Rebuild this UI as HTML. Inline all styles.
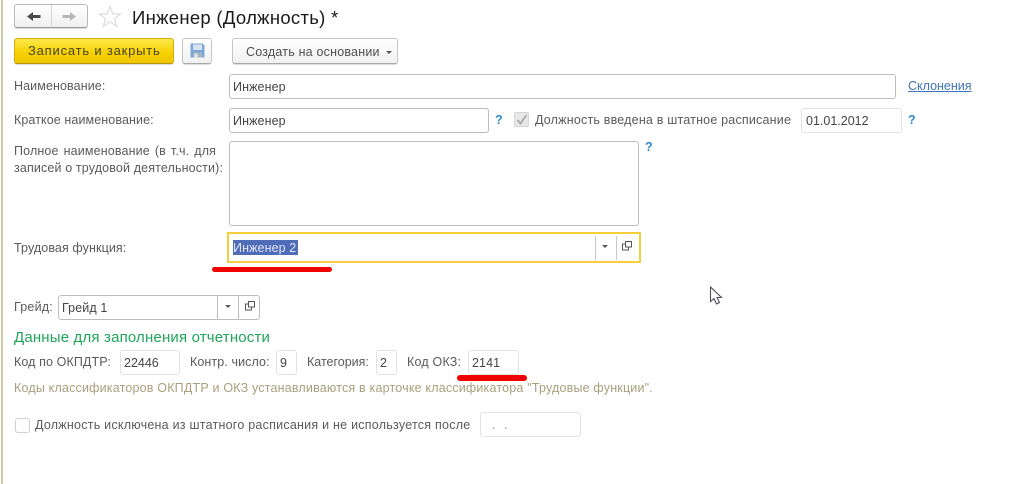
<!DOCTYPE html>
<html lang="ru"><head><meta charset="utf-8"><title>Инженер (Должность)</title>
<style>
html,body{margin:0;padding:0;width:1024px;height:484px;overflow:hidden;background:#fff}
body{position:relative;font-family:"Liberation Sans",sans-serif;font-size:12.5px;color:#4d4d4d;filter:blur(.3px)}
.a,.t,.f,.b{position:absolute;box-sizing:border-box}
.t{white-space:nowrap;line-height:14px;letter-spacing:.1px;color:#5a5a5a}
.f{background:#fff;border:1px solid #c4c4c4;border-radius:3px;white-space:nowrap;padding-left:3px;color:#444;letter-spacing:.1px;line-height:24px}
.d{border-color:#e2e2e2}
.b{border:1px solid #c6c6c6;border-bottom-color:#a8a8a8;border-radius:3px;background:linear-gradient(#fff,#f0f0f0);box-shadow:0 1px 0 #ddd}
.q{color:#2f8ccb;font-weight:bold}
.s{position:absolute;width:1px;background:#c8c8c8}
.tr{position:absolute;width:0;height:0;border-left:3px solid transparent;border-right:3px solid transparent;border-top:3px solid #555}
</style></head><body>
<div class="a" style="left:1px;top:0;width:2px;height:484px;background:#cfcda6"></div>

<div class="b" style="left:14px;top:4px;width:74px;height:24px;border-color:#b8b8b8;border-bottom-color:#999"></div>
<div class="s" style="left:51px;top:5px;height:21px;background:#d5d5d5"></div>
<svg class="a" style="left:26px;top:11px" width="16" height="11"><path d="M1 5.500L7 1V4H14.500V7H7V10Z" fill="#4a4a4a"/></svg>
<svg class="a" style="left:61px;top:11px" width="16" height="11"><path d="M15 5.500L9 1V4H1.500V7H9V10Z" fill="#b8b8b8"/></svg>
<svg class="a" style="left:98px;top:5px" width="24" height="23"><path d="M12 1.500L15 9H22.500L16.500 13.700L18.800 21.500L12 16.800L5.200 21.500L7.500 13.700L1.500 9H9Z" fill="#fff" stroke="#dcdcdc" stroke-width="1.200"/></svg>
<div class="t" style="left:132px;top:8px;font-size:18.500px;line-height:20px;color:#1a1a1a;letter-spacing:.29px">Инженер (Должность) *</div>

<div class="b" style="left:14px;top:38px;width:160px;height:26px;background:linear-gradient(#fbe84a,#f6d000 60%,#eec500);border-color:#d3ae10;border-bottom-color:#b59410"></div>
<div class="t" style="left:28px;top:44px;font-size:13px;color:#4a4420;letter-spacing:.8px">Записать и закрыть</div>
<div class="b" style="left:182px;top:38px;width:30px;height:26px"></div>
<svg class="a" style="left:190px;top:43px" width="15" height="15"><path d="M.5 .5H12.500L14.500 2.500V14.500H.5Z" fill="#7ba7d8"/><rect x="3" y="1.500" width="9" height="5.500" fill="#d5e4f3"/><rect x="3" y="9.500" width="9" height="5" fill="#a8b4c0"/><rect x="4.500" y="10.500" width="3" height="4" fill="#e2e6ea"/></svg>
<div class="b" style="left:232px;top:38px;width:166px;height:26px"></div>
<div class="t" style="left:246px;top:45px;color:#4f4f4f;letter-spacing:.2px">Создать на основании</div>
<div class="tr" style="left:386px;top:51px"></div>

<div class="t" style="left:14px;top:79px">Наименование:</div>
<div class="f" style="left:229px;top:74px;width:667px;height:25px;border-color:#bdbdbd">Инженер</div>
<div class="t" style="left:908px;top:79px;color:#3f73b8;text-decoration:underline;letter-spacing:0">Склонения</div>

<div class="t" style="left:14px;top:113px">Краткое наименование:</div>
<div class="f" style="left:229px;top:108px;width:260px;height:25px;border-color:#bdbdbd">Инженер</div>
<div class="t q" style="left:495px;top:113px">?</div>
<div class="a" style="left:514px;top:112px;width:15px;height:15px;background:#e8e8e8;border:1px solid #d5d5d5;border-radius:2px"></div>
<svg class="a" style="left:514px;top:112px" width="16" height="16"><path d="M3.500 8L6.500 11.500L12.500 3" fill="none" stroke="#aaa" stroke-width="1.800"/></svg>
<div class="t" style="left:535px;top:113px;letter-spacing:.2px">Должность введена в штатное расписание</div>
<div class="f d" style="left:801px;top:108px;width:101px;height:25px;padding-left:4px;letter-spacing:0">01.01.2012</div>
<div class="t q" style="left:908px;top:113px">?</div>

<div class="t" style="left:14px;top:143px;letter-spacing:.14px;word-spacing:1.400px;line-height:17px">Полное наименование (в т.ч. для</div>
<div class="t" style="left:14px;top:160px;letter-spacing:.14px;line-height:17px">записей о трудовой деятельности):</div>
<div class="f" style="left:229px;top:141px;width:410px;height:85px;border-color:#bdbdbd"></div>
<div class="t q" style="left:645px;top:140px">?</div>

<div class="t" style="left:14px;top:241px">Трудовая функция:</div>
<div class="a" style="left:227px;top:232px;width:414px;height:31px;border:2px solid #f6cd3a;background:#fff"></div>
<div class="a" style="left:233px;top:240px;width:65px;height:15px;background:#4e6cb8"></div>
<div class="t" style="left:233px;top:241px;color:#dfe6f6">Инженер 2</div>
<div class="s" style="left:595px;top:236px;height:24px"></div>
<div class="s" style="left:616px;top:236px;height:24px"></div>
<div class="tr" style="left:602px;top:245px"></div>
<svg class="a" style="left:622px;top:241px" width="10" height="10"><path d="M3.500 .5H9.500V6H3.500ZM3.500 3H.5V9H6.500V6" fill="none" stroke="#555"/></svg>
<div class="a" style="left:212px;top:267px;width:120px;height:5px;background:#f00000;border-radius:3px"></div>

<div class="t" style="left:14px;top:300px;letter-spacing:.2px">Грейд:</div>
<div class="f" style="left:58px;top:295px;width:202px;height:25px;border-color:#bdbdbd">Грейд 1</div>
<div class="s" style="left:217px;top:296px;height:23px;background:#bdbdbd"></div>
<div class="s" style="left:238px;top:296px;height:23px;background:#bdbdbd"></div>
<div class="tr" style="left:225px;top:305px"></div>
<svg class="a" style="left:245px;top:301px" width="10" height="10"><path d="M3.500 .5H9.500V6H3.500ZM3.500 3H.5V9H6.500V6" fill="none" stroke="#555"/></svg>

<svg class="a" style="left:709px;top:286px" width="16" height="20"><path d="M1.500 1V15.500L5 12.500L7.500 18L10.500 16.500L8 11.500H12.500Z" fill="#fff" stroke="#50505a" stroke-width="1.100"/></svg>

<div class="t" style="left:14px;top:330px;font-size:15px;line-height:16px;color:#1fa55a;letter-spacing:.17px">Данные для заполнения отчетности</div>

<div class="t" style="left:14px;top:355px;letter-spacing:.1px">Код по ОКПДТР:</div>
<div class="f d" style="left:120px;top:350px;width:60px;height:25px;letter-spacing:0">22446</div>
<div class="t" style="left:190px;top:355px;letter-spacing:.1px">Контр. число:</div>
<div class="f d" style="left:276px;top:350px;width:21px;height:25px">9</div>
<div class="t" style="left:307px;top:355px;letter-spacing:0">Категория:</div>
<div class="f d" style="left:376px;top:350px;width:21px;height:25px">2</div>
<div class="t" style="left:407px;top:355px;letter-spacing:.2px">Код ОКЗ:</div>
<div class="f d" style="left:468px;top:350px;width:51px;height:25px">2141</div>
<div class="a" style="left:457px;top:375px;width:70px;height:6px;background:#f00000;border-radius:3px"></div>

<div class="t" style="left:14px;top:381px;color:#a89f7c;letter-spacing:.19px">Коды классификаторов ОКПДТР и ОКЗ устанавливаются в карточке классификатора "Трудовые функции".</div>

<div class="a" style="left:15px;top:418px;width:15px;height:15px;background:#fff;border:1px solid #d2d2d2;border-radius:3px"></div>
<div class="t" style="left:35px;top:418px;letter-spacing:.24px">Должность исключена из штатного расписания и не используется после</div>
<div class="f d" style="left:480px;top:412px;width:101px;height:25px;padding-left:11px;color:#888;letter-spacing:2.500px">. .</div>
</body></html>
